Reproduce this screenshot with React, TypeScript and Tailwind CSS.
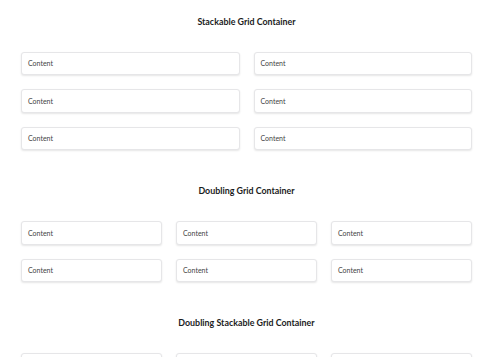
const font = { fontFamily: 'Lato, "Open Sans", sans-serif' };

function Card() {
  return (
    <div className="h-[23.5px] flex items-center px-[6px] bg-white border border-[#e6e6e8] rounded-[3px] shadow-[0_1px_2px_rgba(0,0,0,0.1)] text-[7px] text-[#444]">
      Content
    </div>
  );
}

function Section({ title, cols, rows }: { title: string; cols: number; rows: number }) {
  const gridCls = cols === 2 ? 'grid-cols-2' : 'grid-cols-3';
  return (
    <div>
      <h3 className="text-center font-bold text-[8.9px] text-[#1b1c1d] leading-none">{title}</h3>
      <div className={`grid ${gridCls} gap-x-[14px] gap-y-[14px] mt-[25px]`}>
        {Array.from({ length: cols * rows }).map((_, i) => (
          <Card key={i} />
        ))}
      </div>
    </div>
  );
}

export default function App() {
  return (
    <div className="bg-white min-h-screen overflow-hidden" style={font}>
      <div className="w-[451px] ml-[21px] pt-[18px] flex flex-col gap-[37px]">
        <Section title="Stackable Grid Container" cols={2} rows={3} />
        <Section title="Doubling Grid Container" cols={3} rows={2} />
        <Section title="Doubling Stackable Grid Container" cols={3} rows={1} />
      </div>
    </div>
  );
}
